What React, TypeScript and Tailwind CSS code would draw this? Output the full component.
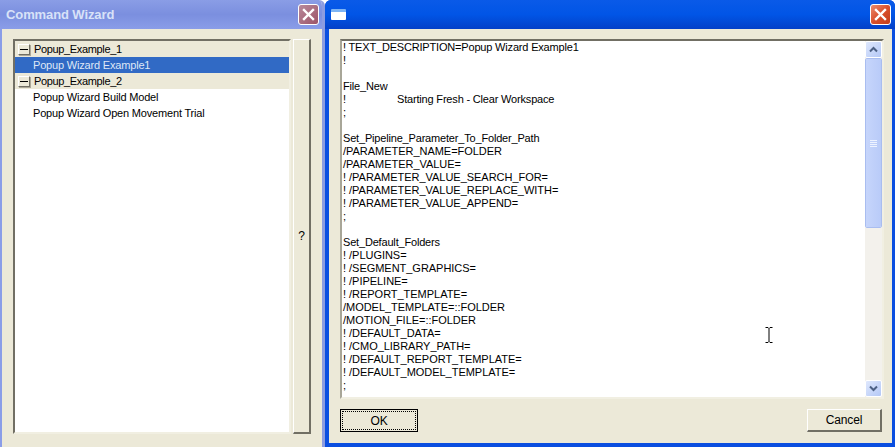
const LINES = [
  "! TEXT_DESCRIPTION=Popup Wizard Example1",
  "!",
  "",
  "File_New",
  "!\t\tStarting Fresh - Clear Workspace",
  ";",
  "",
  "Set_Pipeline_Parameter_To_Folder_Path",
  "/PARAMETER_NAME=FOLDER",
  "/PARAMETER_VALUE=",
  "! /PARAMETER_VALUE_SEARCH_FOR=",
  "! /PARAMETER_VALUE_REPLACE_WITH=",
  "! /PARAMETER_VALUE_APPEND=",
  ";",
  "",
  "Set_Default_Folders",
  "! /PLUGINS=",
  "! /SEGMENT_GRAPHICS=",
  "! /PIPELINE=",
  "! /REPORT_TEMPLATE=",
  "/MODEL_TEMPLATE=::FOLDER",
  "/MOTION_FILE=::FOLDER",
  "! /DEFAULT_DATA=",
  "! /CMO_LIBRARY_PATH=",
  "! /DEFAULT_REPORT_TEMPLATE=",
  "! /DEFAULT_MODEL_TEMPLATE=",
  ";",
];

function CloseButton({ active }: { active: boolean }) {
  return (
    <div className={`w-[21px] h-[21px] rounded-[3px] border border-white flex items-center justify-center ${active ? "bg-gradient-to-br from-[#ea8a6c] via-[#d9502c] to-[#c23c1a]" : "bg-gradient-to-br from-[#b88a9c] to-[#9c5468]"}`}>
      <svg width="13" height="13" viewBox="0 0 13 13">
        <path d="M2 2 L11 11 M11 2 L2 11" stroke="#fff" strokeWidth="2.4" strokeLinecap="square" />
      </svg>
    </div>
  );
}

function Minus() {
  return (
    <span className="w-[12px] h-[11px] bg-[#ece9d8] border border-t-white border-l-white border-r-[#716f64] border-b-[#716f64] flex items-center justify-center shrink-0 shadow-[1px_1px_0_#aca899]">
      <span className="w-[8px] h-px bg-black" />
    </span>
  );
}

function TreeGroup({ label }: { label: string }) {
  return (
    <div className="h-4 bg-[#ece9d8] flex items-center gap-[4px] pl-[3px]">
      <Minus />
      <span className="tracking-[-0.35px]">{label}</span>
    </div>
  );
}

function TreeItem({ label, selected }: { label: string; selected?: boolean }) {
  return (
    <div className={`h-4 leading-4 pl-[18px] ${selected ? "bg-[#316ac5] text-[#dfe7f6]" : ""}`}>{label}</div>
  );
}

function ScrollArrow({ up }: { up?: boolean }) {
  return (
    <div className="h-[17px] rounded-[2px] border border-white bg-gradient-to-br from-[#dfe8fd] to-[#b4c8f6] flex items-center justify-center shrink-0">
      <svg width="9" height="7" viewBox="0 0 9 7">
        <path d={up ? "M1 5.5 L4.5 2 L8 5.5" : "M1 1.5 L4.5 5 L8 1.5"} fill="none" stroke="#4d6185" strokeWidth="2" />
      </svg>
    </div>
  );
}

export default function App() {
  return (
    <div className="relative w-[895px] h-[447px] flex overflow-hidden bg-white font-['Liberation_Sans',sans-serif] text-[11px] tracking-[-0.18px] text-black">
      {/* inactive window */}
      <div className="w-[325px] flex flex-col shrink-0 bg-[#ece9d8] rounded-tr-[6px] overflow-hidden border-r-[3px] border-[#8c9ce0]">
        <div className="h-[29px] shrink-0 bg-gradient-to-b from-[#8a9de6] via-[#7b8fdf] to-[#8a9de8] flex items-center justify-between pl-[6px] pr-[3px]">
          <span className="text-[#d8e2f8] font-bold text-[13px] tracking-[-0.1px]">Command Wizard</span>
          <CloseButton active={false} />
        </div>
        <div className="flex-1 flex gap-[2px] pl-[13px] pr-[10px] pt-[10px] pb-[13px] border-l-2 border-[#8a9de8]">
          <div className="w-[278px] ml-[-2px] bg-white border-2 border-t-[#716f64] border-l-[#716f64] border-r-[#f1efe2] border-b-[#f1efe2]">
            <TreeGroup label="Popup_Example_1" />
            <TreeItem label="Popup Wizard Example1" selected />
            <TreeGroup label="Popup_Example_2" />
            <TreeItem label="Popup Wizard Build Model" />
            <TreeItem label="Popup Wizard Open Movement Trial" />
          </div>
          <div className="w-[18px] border border-t-white border-l-white border-r-2 border-b-2 border-r-[#716f64] border-b-[#716f64] flex items-center justify-center text-[12px]">?</div>
        </div>
      </div>

      {/* active window */}
      <div className="flex-1 flex flex-col rounded-t-[6px] overflow-hidden bg-[#0a4ee0]">
        <div className="h-[29px] shrink-0 bg-gradient-to-b from-[#0a5ae8] via-[#0155e6] to-[#0340c8] flex items-center justify-between pl-[6px] pr-[4px]">
          <span className="w-[15px] h-[11px] rounded-[1px] bg-white border-t-[3px] border-[#7db4f4]" />
          <CloseButton active />
        </div>
        <div className="flex-1 flex flex-col ml-[4px] mr-[3px] mb-[4px] bg-[#ece9d8] pl-[11px] pr-[8px] pt-[10px]">
          <div className="h-[360px] flex bg-white border-2 border-t-[#716f64] border-l-[#a8a698] border-r-[#f1efe2] border-b-[#f1efe2] shrink-0">
            <div className="flex-1 pl-[1px] overflow-hidden">
              {LINES.map((line, i) => (
                <div key={i} className={`h-[13px] leading-[13px] whitespace-pre [tab-size:27px] ${line.startsWith("/") || line.startsWith("! /") ? "tracking-[-0.03px]" : ""}`}>{line || " "}</div>
              ))}
            </div>
            <div className="w-[17px] flex flex-col bg-[#f3f1ec] shrink-0">
              <ScrollArrow up />
              <div className="h-[170px] rounded-[2px] border border-white outline outline-1 -outline-offset-1 outline-[#a9bdf0] bg-gradient-to-r from-[#c6d5fb] to-[#b9cbf8] flex flex-col items-center justify-center gap-px shrink-0">
                <span className="w-[7px] h-px bg-[#eef3ff]" />
                <span className="w-[7px] h-px bg-[#eef3ff]" />
                <span className="w-[7px] h-px bg-[#eef3ff]" />
                <span className="w-[7px] h-px bg-[#eef3ff]" />
              </div>
              <div className="flex-1" />
              <ScrollArrow />
            </div>
          </div>
          <div className="flex justify-between mt-[10px] pr-[2px]">
            <button className="w-[78px] h-[23px] border border-black p-px">
              <span className="h-full flex items-center justify-center border border-dotted border-black text-[12px]">OK</span>
            </button>
            <button className="w-[75px] h-[23px] border border-t-white border-l-white border-r-2 border-b-2 border-r-[#716f64] border-b-[#716f64] text-[12px]">Cancel</button>
          </div>
        </div>
      </div>

      {/* mouse pointer over the text */}
      <svg className="absolute left-[765px] top-[327px]" width="8" height="16" viewBox="0 0 8 16">
        <path d="M0.5 0.5 H3 L4 1.5 L5 0.5 H7.5 M4 1.5 V14.5 M0.5 15.5 H3 L4 14.5 L5 15.5 H7.5" fill="none" stroke="#000" strokeWidth="1" />
      </svg>
    </div>
  );
}
